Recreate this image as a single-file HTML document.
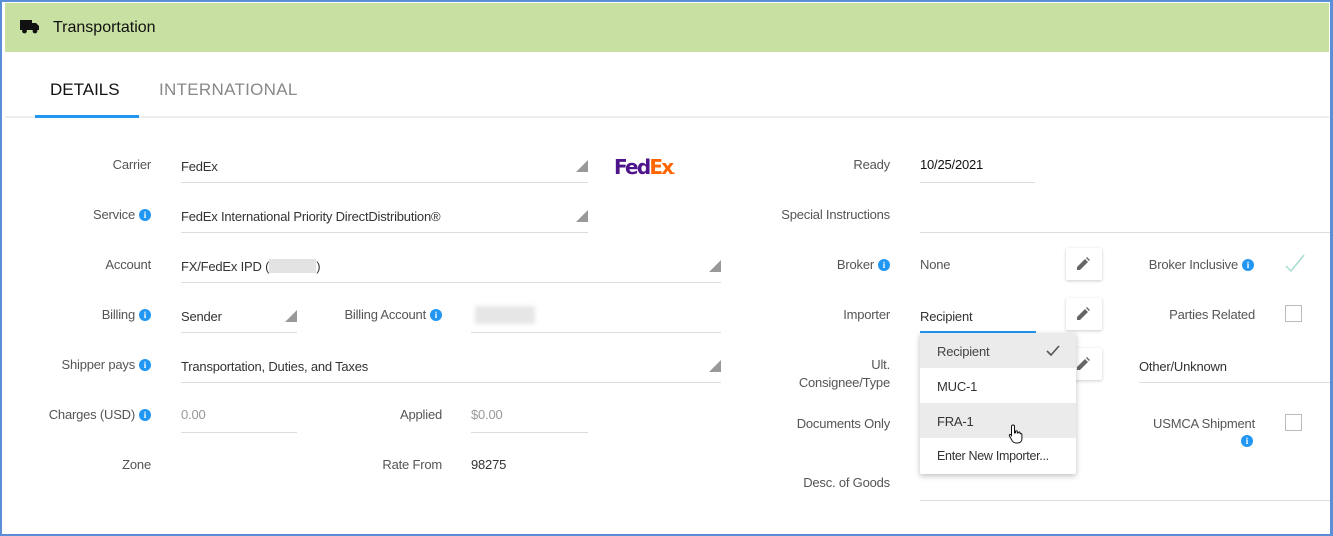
<!DOCTYPE html>
<html><head><meta charset="utf-8"><style>
*{margin:0;padding:0;box-sizing:border-box}
body{width:1333px;height:536px;overflow:hidden;background:#fff;font-family:"Liberation Sans",Arial,sans-serif;font-size:13px;color:#333;position:relative}
.frame{position:absolute;left:0;top:0;width:1333px;height:536px;border:2px solid #5a8fd8;border-right-width:3px}
.hdr{position:absolute;left:5px;top:3px;width:1324px;height:49px;background:#c8e0a2}
.hdr span{position:absolute;left:48px;top:16px;font-size:16px;color:#111}
.a{position:absolute;white-space:nowrap;letter-spacing:-0.2px}
.lbl{position:absolute;color:#555;text-align:right;white-space:nowrap;letter-spacing:-0.2px}
.ul{position:absolute;height:1px;background:#ddd}
.tri{position:absolute;width:0;height:0;border-left:12px solid transparent;border-bottom:12px solid #999}
.i{display:inline-block;width:12px;height:12px;border-radius:50%;background:#2196f3;color:#fff;font-size:9px;font-weight:bold;text-align:center;line-height:12px;vertical-align:1px;margin-left:4px;font-family:"Liberation Serif",serif;letter-spacing:0}
.btn{position:absolute;width:36px;height:32px;background:#fff;box-shadow:0 1px 3px rgba(0,0,0,.2);border-radius:2px}
.btn svg{position:absolute;left:11px;top:9px}
.cb{position:absolute;width:17px;height:17px;border:1px solid #bbb}
.blur{position:absolute;background:#e6e6e6;filter:blur(2px)}
.dd div{white-space:nowrap;letter-spacing:-0.2px}
</style></head><body>
<div class="frame"></div>
<div class="hdr">
<svg style="position:absolute;left:15px;top:16px" width="20" height="15" viewBox="0 0 20 15"><rect x="0" y="1" width="12" height="9" fill="#111"/><path d="M12 4h4l3 3v4H12z" fill="#111"/><rect x="0" y="8" width="19" height="3" fill="#111"/><circle cx="4.5" cy="12" r="2.4" fill="#111"/><circle cx="15" cy="12" r="2.4" fill="#111"/></svg>
<span>Transportation</span></div>
<div class="a" style="left:50px;top:80px;font-size:17px;color:#111;letter-spacing:0">DETAILS</div>
<div class="a" style="left:159px;top:80px;font-size:17px;color:#888;letter-spacing:0.3px">INTERNATIONAL</div>
<div class="ul" style="left:5px;top:116px;width:1324px;height:2px;background:#eee"></div>
<div class="ul" style="left:35px;top:115px;width:104px;height:3px;background:#2196f3"></div>

<div class="lbl" style="right:1182px;top:157px">Carrier</div>
<div class="a" style="left:181px;top:159px">FedEx</div>
<div class="ul" style="left:181px;top:182px;width:407px"></div><div class="tri" style="left:576px;top:160px"></div>
<div class="a" style="left:614px;top:155px;font-size:20px;font-weight:bold;letter-spacing:-1.8px;font-family:'DejaVu Sans',sans-serif"><span style="color:#4d148c">Fed</span><span style="color:#ff6600">Ex</span><span style="color:#ff6600;font-size:8px">.</span></div>

<div class="lbl" style="right:1182px;top:207px">Service<span class="i">i</span></div>
<div class="a" style="left:181px;top:209px">FedEx International Priority DirectDistribution®</div>
<div class="ul" style="left:181px;top:232px;width:407px"></div><div class="tri" style="left:576px;top:210px"></div>

<div class="lbl" style="right:1182px;top:257px">Account</div>
<div class="a" style="left:181px;top:259px">FX/FedEx IPD (<span style="display:inline-block;width:47px;height:14px;background:#e3e3e3;vertical-align:-2px"></span>)</div>
<div class="ul" style="left:181px;top:282px;width:540px"></div><div class="tri" style="left:709px;top:260px"></div>

<div class="lbl" style="right:1182px;top:307px">Billing<span class="i">i</span></div>
<div class="a" style="left:181px;top:309px">Sender</div>
<div class="ul" style="left:181px;top:332px;width:116px"></div><div class="tri" style="left:285px;top:310px"></div>
<div class="lbl" style="right:891px;top:307px">Billing Account<span class="i">i</span></div>
<div class="blur" style="left:475px;top:306px;width:60px;height:18px"></div>
<div class="ul" style="left:471px;top:332px;width:250px"></div>

<div class="lbl" style="right:1182px;top:357px">Shipper pays<span class="i">i</span></div>
<div class="a" style="left:181px;top:359px">Transportation, Duties, and Taxes</div>
<div class="ul" style="left:181px;top:382px;width:540px"></div><div class="tri" style="left:709px;top:360px"></div>

<div class="lbl" style="right:1182px;top:407px">Charges (USD)<span class="i">i</span></div>
<div class="a" style="left:181px;top:407px;color:#999">0.00</div>
<div class="ul" style="left:181px;top:432px;width:116px"></div>
<div class="lbl" style="right:891px;top:407px">Applied</div>
<div class="a" style="left:471px;top:407px;color:#999">$0.00</div>
<div class="ul" style="left:471px;top:432px;width:117px"></div>

<div class="lbl" style="right:1182px;top:457px">Zone</div>
<div class="lbl" style="right:891px;top:457px">Rate From</div>
<div class="a" style="left:471px;top:457px">98275</div>

<div class="lbl" style="right:443px;top:157px">Ready</div>
<div class="a" style="left:920px;top:157px;color:#111">10/25/2021</div>
<div class="ul" style="left:920px;top:182px;width:115px"></div>
<div class="lbl" style="right:443px;top:207px">Special Instructions</div>
<div class="ul" style="left:920px;top:232px;width:410px"></div>
<div class="lbl" style="right:443px;top:257px">Broker<span class="i">i</span></div>
<div class="a" style="left:920px;top:257px;color:#555">None</div>
<div class="btn" style="left:1066px;top:248px"><svg width="13" height="13" viewBox="0 0 13 13"><path d="M0 13v-3l8-8 3 3-8 8zM9 1l1-1 3 3-1 1z" fill="#666"/></svg></div>
<div class="lbl" style="right:79px;top:257px">Broker Inclusive<span class="i">i</span></div>
<svg style="position:absolute;left:1285px;top:254px" width="20" height="18"><path d="M1 12l5 5L19 1" fill="none" stroke="#a8dcd0" stroke-width="1.5"/></svg>
<div class="lbl" style="right:443px;top:307px">Importer</div>
<div class="a" style="left:920px;top:309px;color:#333">Recipient</div>
<div class="ul" style="left:920px;top:331px;width:116px;height:2px;background:#2196f3"></div>
<div class="btn" style="left:1066px;top:298px"><svg width="13" height="13" viewBox="0 0 13 13"><path d="M0 13v-3l8-8 3 3-8 8zM9 1l1-1 3 3-1 1z" fill="#666"/></svg></div>
<div class="lbl" style="right:78px;top:307px">Parties Related</div>
<div class="cb" style="left:1285px;top:305px"></div>
<div class="lbl" style="right:443px;top:356px;line-height:18px">Ult.<br>Consignee/Type</div>
<div class="btn" style="left:1066px;top:348px"><svg width="13" height="13" viewBox="0 0 13 13"><path d="M0 13v-3l8-8 3 3-8 8zM9 1l1-1 3 3-1 1z" fill="#666"/></svg></div>
<div class="a" style="left:1139px;top:359px">Other/Unknown</div>
<div class="ul" style="left:1139px;top:382px;width:191px"></div>
<div class="lbl" style="right:443px;top:416px">Documents Only</div>
<div class="lbl" style="right:78px;top:416px">USMCA Shipment</div>
<div class="a" style="left:1241px;top:433px"><span class="i" style="margin:0">i</span></div>
<div class="cb" style="left:1285px;top:414px"></div>
<div class="lbl" style="right:443px;top:475px">Desc. of Goods</div>
<div class="ul" style="left:920px;top:500px;width:410px"></div>

<div class="dd" style="position:absolute;left:920px;top:333px;width:156px;height:141px;background:#fff;box-shadow:0 2px 6px rgba(0,0,0,.25);border-radius:2px">
<div style="height:35px;background:#ebebeb;padding:11px 17px;color:#444">Recipient<svg style="position:absolute;left:126px;top:12px" width="14" height="11"><path d="M1 6l4 4 8-9" fill="none" stroke="#555" stroke-width="1.6"/></svg></div>
<div style="height:35px;padding:11px 17px;color:#333">MUC-1</div>
<div style="height:35px;background:#ebebeb;padding:11px 17px;color:#333">FRA-1</div>
<div style="height:36px;padding:11px 17px;color:#333;font-size:12.5px;letter-spacing:-0.3px">Enter New Importer...</div>
</div>
<svg style="position:absolute;left:1008px;top:424px" width="16" height="20" viewBox="0 0 16 20"><path d="M5 1c1 0 1.5.6 1.5 1.5V9l1-.3V7.5c0-1 1.6-1 1.8 0V9l1-.2c.2-1 1.7-1 1.8 0v1.3c.3-.8 1.8-.7 1.8.3V15c0 2-1.5 4-4 4H8c-2 0-3-1-4-2.5L1.5 12c-.6-1 .5-2 1.4-1.3L3.5 11.5V2.5C3.5 1.6 4 1 5 1z" fill="#fff" stroke="#111" stroke-width="1"/></svg>
</body></html>
